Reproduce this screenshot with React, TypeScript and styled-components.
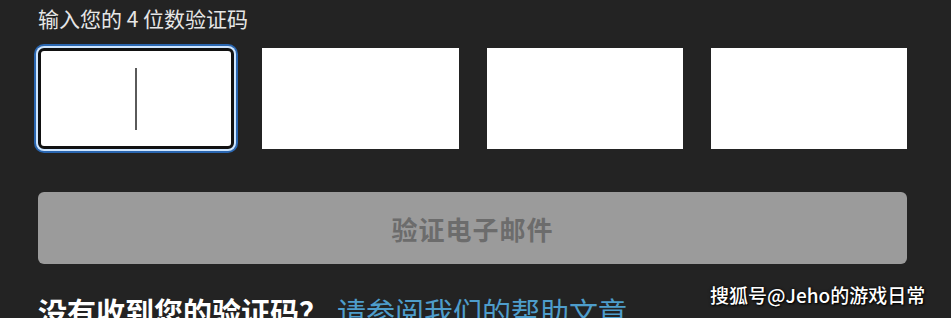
import React, { useState } from "react";
import styled, { createGlobalStyle } from "styled-components";

const GlobalStyle = createGlobalStyle`
  html, body {
    margin: 0;
    padding: 0;
    background: #232323;
    overflow: hidden;
  }
  body {
    font-family: "Noto Sans CJK SC", "Noto Sans", "Liberation Sans", sans-serif;
  }
`;

const Page = styled.div`
  position: relative;
  width: 951px;
  height: 318px;
  overflow: hidden;
  background: #232323;
`;

const Form = styled.div`
  display: flex;
  flex-direction: column;
  width: 869px;
  padding: 5px 0 0 38px;
`;

const Label = styled.div`
  font-size: 21px;
  line-height: 27px;
  color: #e6e6e6;
  margin-bottom: 16px;
`;

const CodeRow = styled.div`
  display: grid;
  grid-template-columns: repeat(4, 1fr);
  gap: 28px;
  height: 101px;
`;

const CodeBox = styled.div<{ $active?: boolean }>`
  display: flex;
  align-items: center;
  justify-content: center;
  background: #ffffff;
  box-sizing: border-box;
  border: ${({ $active }) => ($active ? "3px solid #111" : "none")};
  border-radius: ${({ $active }) => ($active ? "6px" : "0")};
  box-shadow: ${({ $active }) =>
    $active ? "0 0 0 2px #cfe6ff, 0 0 0 4px #2a66b0" : "none"};
`;

const Caret = styled.span`
  display: block;
  width: 2px;
  height: 62px;
  background: #5a5a5a;
`;

const SubmitButton = styled.button`
  margin-top: 43px;
  height: 72px;
  border: none;
  border-radius: 6px;
  background: #9b9b9b;
  color: #6c6c6c;
  font-family: inherit;
  font-size: 26px;
  font-weight: 700;
  letter-spacing: 1px;
  cursor: not-allowed;
`;

const HelpLine = styled.div`
  margin-top: 29px;
  display: flex;
  align-items: baseline;
  gap: 9px;
  font-size: 29px;
  line-height: 36px;
  white-space: nowrap;
`;

const HelpQuestion = styled.span`
  color: #ffffff;
  font-weight: 700;
`;

const HelpLink = styled.a`
  color: #4e9dcb;
  text-decoration: none;
  cursor: pointer;
`;

const Watermark = styled.div`
  position: absolute;
  left: 710px;
  top: 282px;
  font-size: 19px;
  line-height: 26px;
  font-weight: 500;
  color: #ffffff;
  text-shadow: 1px 1px 2px #000, 0 0 3px rgba(0, 0, 0, 0.8);
  white-space: nowrap;
`;

export default function App() {
  const [digits] = useState(["", "", "", ""]);

  return (
    <Page>
      <GlobalStyle />
      <Form>
        <Label>输入您的 4 位数验证码</Label>
        <CodeRow>
          {digits.map((d, i) => (
            <CodeBox key={i} $active={i === 0}>
              {i === 0 ? <Caret /> : d}
            </CodeBox>
          ))}
        </CodeRow>
        <SubmitButton disabled>验证电子邮件</SubmitButton>
        <HelpLine>
          <HelpQuestion>没有收到您的验证码？</HelpQuestion>
          <HelpLink>请参阅我们的帮助文章</HelpLink>
        </HelpLine>
      </Form>
      <Watermark>搜狐号@Jeho的游戏日常</Watermark>
    </Page>
  );
}
